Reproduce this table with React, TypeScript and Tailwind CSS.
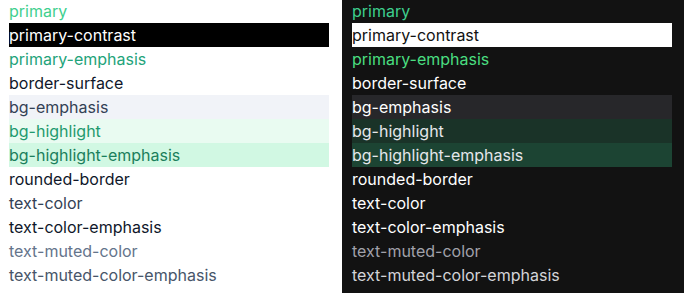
const rows = [
  "primary",
  "primary-contrast",
  "primary-emphasis",
  "border-surface",
  "bg-emphasis",
  "bg-highlight",
  "bg-highlight-emphasis",
  "rounded-border",
  "text-color",
  "text-color-emphasis",
  "text-muted-color",
  "text-muted-color-emphasis",
];

const light: Record<string, string> = {
  primary: "text-[#3ecf8e]",
  "primary-contrast": "bg-black text-white",
  "primary-emphasis": "text-[#22a37a]",
  "border-surface": "text-[#0f172a]",
  "bg-emphasis": "bg-[#f1f3f8] text-[#334155]",
  "bg-highlight": "bg-[#e9fbf1] text-[#1f9a6e]",
  "bg-highlight-emphasis": "bg-[#d1f8e3] text-[#1b7f5c]",
  "rounded-border": "text-[#0f172a]",
  "text-color": "text-[#334155]",
  "text-color-emphasis": "text-[#0f172a]",
  "text-muted-color": "text-[#64748b]",
  "text-muted-color-emphasis": "text-[#475569]",
};

const dark: Record<string, string> = {
  primary: "text-[#3ecf8e]",
  "primary-contrast": "bg-white text-[#121212]",
  "primary-emphasis": "text-[#4ade80]",
  "border-surface": "text-white",
  "bg-emphasis": "bg-[#27272a] text-white",
  "bg-highlight": "bg-[#1a3328] text-[#e5e7eb]",
  "bg-highlight-emphasis": "bg-[#1c4433] text-[#e5e7eb]",
  "rounded-border": "text-white",
  "text-color": "text-white",
  "text-color-emphasis": "text-white",
  "text-muted-color": "text-[#a1a1aa]",
  "text-muted-color-emphasis": "text-[#d4d4d8]",
};

function Panel({ dark: isDark, styles }: { dark?: boolean; styles: Record<string, string> }) {
  return (
    <div className={isDark ? "w-[342px] bg-[#121212] pl-[10px]" : "w-[342px] bg-white pl-[9px]"}>
      <div className="-mt-px flex w-[320px] flex-col">
        {rows.map((r) => (
          <div key={r} className={`h-6 leading-6 text-[16px] ${styles[r]}`}>
            {r}
          </div>
        ))}
      </div>
    </div>
  );
}

export default function App() {
  return (
    <div className="flex h-[293px] w-[684px] overflow-hidden font-['Inter',sans-serif]">
      <Panel styles={light} />
      <Panel dark styles={dark} />
    </div>
  );
}
